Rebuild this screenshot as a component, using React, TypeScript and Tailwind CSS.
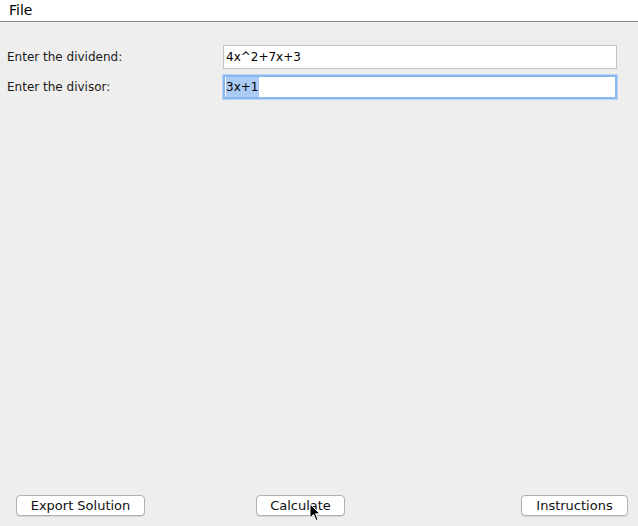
import React from 'react';

const font = { fontFamily: '"DejaVu Sans", "Liberation Sans", sans-serif' };

function Field({ label, children, focused }: { label: string; children: React.ReactNode; focused?: boolean }) {
  return (
    <div className="flex items-center h-[24px]">
      <div className="w-[223px] pl-[7px] text-[12px] text-[#1a1a1a]">{label}</div>
      <div
        className={`w-[394px] h-[24px] bg-white flex items-center px-[1px] text-[12px] text-black ${
          focused
            ? 'border-2 border-[#8ab7ee] shadow-[0_0_0_1px_#b9d4f4]'
            : 'border border-[#c3c3c3] pl-[2px]'
        }`}
      >
        {children}
      </div>
    </div>
  );
}

function Btn({ label, className }: { label: string; className: string }) {
  return (
    <button
      className={`h-[21px] rounded-[4px] bg-white border border-[#b0b0b0] text-[13px] text-[#111] flex items-center justify-center shadow-[0_1px_0_#d8d8d8] ${className}`}
    >
      {label}
    </button>
  );
}

export default function App() {
  return (
    <div className="w-[638px] h-[526px] bg-[#eeeeee] flex flex-col relative overflow-hidden" style={font}>
      <div className="h-[22px] bg-white border-b border-[#8c8c8c] flex items-center pl-[9px] text-[14px] text-black">
        File
      </div>

      <div className="flex flex-col gap-[6px] pt-[23px]">
        <Field label="Enter the dividend:">4x^2+7x+3</Field>
        <Field label="Enter the divisor:" focused>
          <span className="bg-[#a9cbf6] h-[20px] flex items-center pr-[1px]">3x+1</span>
        </Field>
      </div>

      <div className="flex-1" />

      <div className="flex items-start h-[31px]">
        <Btn label="Export Solution" className="ml-[16px] w-[129px]" />
        <Btn label="Calculate" className="ml-[111px] w-[89px]" />
        <Btn label="Instructions" className="ml-[176px] w-[107px]" />
      </div>

      <svg className="absolute left-[309px] top-[503px]" width="12" height="19" viewBox="0 0 12 19">
        <path d="M1 1 L1 15 L4.5 11.5 L7 17.5 L9 16.6 L6.6 10.8 L11 10.8 Z" fill="#000" stroke="#fff" strokeWidth="1" />
      </svg>
    </div>
  );
}
